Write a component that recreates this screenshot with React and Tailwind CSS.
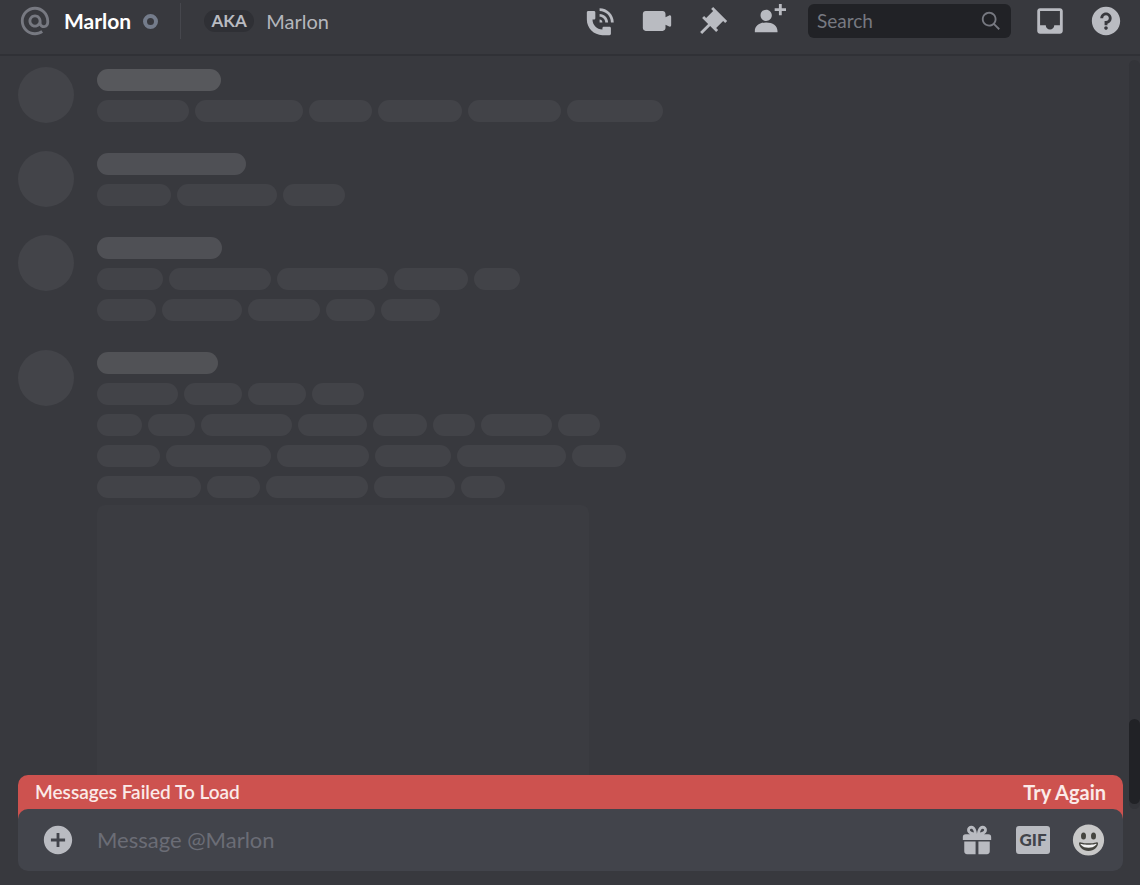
const PATHS = {
  at: "M12 2C6.486 2 2 6.486 2 12C2 17.515 6.486 22 12 22C14.039 22 15.993 21.398 17.652 20.259L16.521 18.611C15.195 19.519 13.633 20 12 20C7.589 20 4 16.411 4 12C4 7.589 7.589 4 12 4C16.411 4 20 7.589 20 12V12.782C20 14.17 19.402 15 18.4 15L18.398 15.018C18.338 15.005 18.273 15 18.209 15H18C17.437 15 16.6 14.182 16.6 13.631V12C16.6 9.464 14.537 7.4 12 7.4C9.463 7.4 7.4 9.463 7.4 12C7.4 14.537 9.463 16.6 12 16.6C13.234 16.6 14.35 16.106 15.177 15.313C15.826 16.269 16.93 17 18 17L18.002 16.981C18.064 16.994 18.129 17 18.195 17H18.4C20.552 17 22 15.306 22 12.782V12C22 6.486 17.514 2 12 2ZM12 14.599C10.566 14.599 9.4 13.433 9.4 11.999C9.4 10.565 10.566 9.399 12 9.399C13.434 9.399 14.6 10.565 14.6 11.999C14.6 13.433 13.434 14.599 12 14.599Z",
  call: "M11 5V3C16.515 3 21 7.486 21 13H19C19 8.589 15.411 5 11 5ZM17 13H15C15 10.795 13.206 9 11 9V7C14.309 7 17 9.691 17 13ZM11 11V13H13C13 11.896 12.105 11 11 11ZM14 16H18C18.553 16 19 16.447 19 17V21C19 21.553 18.553 22 18 22H13C6.925 22 2 17.075 2 11V6C2 5.447 2.448 5 3 5H7C7.553 5 8 5.447 8 6V10C8 10.553 7.553 11 7 11H6C6.063 14.938 9 18 13 18V17C13 16.447 13.447 16 14 16Z",
  video: "M21.526 8.149C21.231 7.966 20.862 7.951 20.553 8.105L18 9.382V7C18 5.897 17.103 5 16 5H4C2.897 5 2 5.897 2 7V17C2 18.104 2.897 19 4 19H16C17.103 19 18 18.104 18 17V14.618L20.553 15.894C20.694 15.965 20.847 16 21 16C21.183 16 21.365 15.949 21.526 15.851C21.82 15.668 22 15.347 22 15V9C22 8.653 21.82 8.332 21.526 8.149Z",
  pin: "M22 12L12.101 2.101L10.686 3.514L12.101 4.929L7.151 9.878V9.88L5.736 8.465L4.322 9.88L8.565 14.122L2.908 19.778L4.322 21.192L9.979 15.536L14.222 19.778L15.636 18.364L14.222 16.95L19.171 12H19.172L20.586 13.414L22 12Z",
  addFriend: "M21 3H24V5H21V8H19V5H16V3H19V0H21V3ZM10 12C12.205 12 14 10.205 14 8C14 5.795 12.205 4 10 4C7.795 4 6 5.795 6 8C6 10.205 7.795 12 10 12ZM10 13C5.289 13 2 15.467 2 19V20H18V19C18 15.467 14.711 13 10 13Z",
  search: "M21.707 20.293L16.314 14.9C17.403 13.504 18 11.799 18 10C18 7.863 17.167 5.854 15.656 4.344C14.146 2.832 12.137 2 10 2C7.863 2 5.854 2.832 4.344 4.344C2.833 5.854 2 7.863 2 10C2 12.137 2.833 14.146 4.344 15.656C5.854 17.168 7.863 18 10 18C11.799 18 13.504 17.404 14.9 16.314L20.293 21.706L21.707 20.293ZM10 16C8.397 16 6.891 15.376 5.758 14.243C4.624 13.11 4 11.603 4 10C4 8.398 4.624 6.891 5.758 5.758C6.891 4.624 8.397 4 10 4C11.603 4 13.109 4.624 14.242 5.758C15.376 6.891 16 8.398 16 10C16 11.603 15.376 13.11 14.242 14.243C13.109 15.376 11.603 16 10 16Z",
  inbox: "M19 3H4.99C3.88 3 3.01 3.89 3.01 5L3 19C3 20.1 3.88 21 4.99 21H19C20.1 21 21 20.1 21 19V5C21 3.89 20.1 3 19 3ZM19 15H15C15 16.66 13.65 18 12 18C10.35 18 9 16.66 9 15H4.99V5H19V15Z",
  help: "M12 2C6.486 2 2 6.487 2 12C2 17.515 6.486 22 12 22C17.514 22 22 17.515 22 12C22 6.487 17.514 2 12 2ZM12 18.25C11.31 18.25 10.75 17.691 10.75 17C10.75 16.31 11.31 15.75 12 15.75C12.69 15.75 13.25 16.31 13.25 17C13.25 17.691 12.69 18.25 12 18.25ZM13 13.875V15H11V12H12C13.104 12 14 11.103 14 10C14 8.896 13.104 8 12 8C10.896 8 10 8.896 10 10H8C8 7.795 9.795 6 12 6C14.205 6 16 7.795 16 10C16 11.861 14.723 13.429 13 13.875Z",
  plus: "M12 2C6.486 2 2 6.486 2 12C2 17.515 6.486 22 12 22C17.514 22 22 17.515 22 12C22 6.486 17.514 2 12 2ZM17 13H13V17H11V13H7V11H11V7H13V11H17V13Z",
  gift: "M16.886 8H20a2 2 0 0 1 2 2v2H2v-2a2 2 0 0 1 2-2h3.114c-.451-.235-.878-.522-1.235-.878a3 3 0 0 1 0-4.243c1.133-1.133 3.107-1.133 4.242-.002C11.758 4.514 11.979 7.595 12 7.941c.021-.346.242-3.427 1.879-5.064 1.135-1.131 3.109-1.131 4.242.002a3 3 0 0 1 0 4.243c-.357.356-.784.643-1.235.878ZM7.293 5.707c-.391-.39-.391-1.024 0-1.414A.99.99 0 0 1 8 4c.267 0 .518.104.707.293.605.606.963 1.617 1.149 2.485-.899-.19-1.944-.452-2.563-1.071ZM16.707 5.707c.391-.39.391-1.024 0-1.414A.99.99 0 0 0 16 4a.99.99 0 0 0-.707.293c-.605.606-.963 1.617-1.149 2.485.899-.19 1.944-.452 2.563-1.071ZM3 13h8v9H5a2 2 0 0 1-2-2v-7ZM13 13h8v7a2 2 0 0 1-2 2h-6v-9Z",
};

function Icon({ name, className = "size-[34px]" }) {
  return (
    <svg viewBox="0 0 24 24" fill="currentColor" fillRule="evenodd" aria-hidden="true" className={className}>
      <path d={PATHS[name]} />
    </svg>
  );
}

function IconButton({ name, label }) {
  return (
    <button type="button" aria-label={label} className="shrink-0 text-[#b9bbc1] hover:text-white">
      <Icon name={name} />
    </button>
  );
}

const GROUPS = [
  { name: 124, tone: "bg-[#57585c]", lines: [[92, 108, 63, 84, 93, 96]] },
  { name: 149, tone: "bg-[#4f5055]", lines: [[74, 100, 62]] },
  { name: 125, tone: "bg-[#4f5055]", lines: [[66, 102, 111, 74, 46], [59, 80, 72, 49, 59]] },
  {
    name: 121,
    tone: "bg-[#515256]",
    lines: [
      [81, 58, 58, 52],
      [45, 47, 91, 69, 54, 42, 71, 42],
      [63, 105, 92, 76, 109, 54],
      [104, 53, 102, 81, 44],
    ],
    attachment: true,
  },
];

function Placeholder({ group }) {
  return (
    <li className="flex gap-[23px]">
      <div className="size-14 shrink-0 rounded-full bg-[#434449]" />
      <div className="flex flex-col gap-[9px] pt-0.5 pb-[29px]">
        <div className={`h-[22px] rounded-full ${group.tone}`} style={{ width: group.name }} />
        {group.lines.map((line, i) => (
          <div key={i} className="flex gap-1.5">
            {line.map((width, j) => (
              <div key={j} className="h-[22px] rounded-full bg-[#424348]" style={{ width }} />
            ))}
          </div>
        ))}
        {group.attachment && <div className="-mt-0.5 h-80 w-[492px] rounded-lg bg-[#3b3c41]" />}
      </div>
    </li>
  );
}

function Header() {
  return (
    <header className="flex h-14 shrink-0 items-center justify-between border-b-2 border-[#303136] pr-[17px] pb-3 pl-[18px]">
      <div className="flex items-center">
        <Icon name="at" className="size-[34px] text-[#777981]" />
        <h1 className="ml-3 text-[21px] leading-7 font-bold text-white">Marlon</h1>
        <span role="img" aria-label="Offline" className="ml-3 size-[15px] rounded-full border-4 border-[#747c8b]" />
        <div className="ml-[22px] h-9 w-px bg-[#46474d]" />
        <span className="ml-[23px] flex h-[22px] w-[50px] items-center justify-center rounded-full bg-[#2f3035] text-[17px] leading-5 font-bold text-[#b9bbc1]">
          AKA
        </span>
        <span className="ml-3 text-[20px] leading-7 text-[#b4b6bc]">Marlon</span>
      </div>
      <div className="flex items-center gap-[22px]">
        <IconButton name="call" label="Start Voice Call" />
        <IconButton name="video" label="Start Video Call" />
        <IconButton name="pin" label="Pinned Messages" />
        <IconButton name="addFriend" label="Add Friends to DM" />
        <label className="flex h-[34px] w-[203px] items-center rounded-md bg-[#212226] px-[9px] text-[#777981]">
          <input
            type="text"
            aria-label="Search"
            placeholder="Search"
            className="min-w-0 flex-1 bg-transparent text-[19px] leading-6 text-white outline-none placeholder:text-[#777981]"
          />
          <Icon name="search" className="size-[22px] shrink-0" />
        </label>
        <IconButton name="inbox" label="Inbox" />
        <IconButton name="help" label="Help" />
      </div>
    </header>
  );
}

function EmojiFace() {
  return (
    <svg viewBox="0 0 34 34" aria-hidden="true" className="size-[34px]">
      <circle cx="16.500" cy="17" r="15.600" fill="#c8c8c8" />
      <ellipse cx="11.500" cy="13" rx="2.500" ry="3.500" fill="#45453f" />
      <ellipse cx="21.500" cy="13" rx="2.500" ry="3.500" fill="#45453f" />
      <path
        d="M16.500 20.300c-3.200 0-5.400-.4-7.800-.9-.6-.1-1.700 0-1.700 1 0 3.300 3.800 7.500 9.500 7.500s9.500-4.200 9.500-7.500c0-1-1.100-1.100-1.700-1-2.400.5-4.600.9-7.800.9Z"
        fill="#45453f"
      />
      <path d="M8.300 20.800s3 1 8.200 1 8.200-1 8.200-1-1.600 4-8.200 4-8.200-4-8.200-4Z" fill="#f2f2f2" />
    </svg>
  );
}

function Composer() {
  return (
    <form className="relative -mt-[34px] mr-[17px] mb-3.5 ml-[18px] shrink-0" onSubmit={(e) => e.preventDefault()}>
      <div role="alert" className="flex h-11 justify-between rounded-t-[10px] bg-[#cd524f] px-[17px] text-[#fbeae8]">
        <span className="text-[19px] leading-[34px] font-semibold">Messages Failed To Load</span>
        <button type="button" className="h-[34px] text-[20px] leading-[34px] font-bold hover:underline">
          Try Again
        </button>
      </div>
      <div className="-mt-2.5 flex h-[62px] items-center gap-[22px] rounded-[10px] bg-[#42444b] pr-[17px] pl-[23px]">
        <IconButton name="plus" label="Attach a file" />
        <input
          type="text"
          aria-label="Message @Marlon"
          placeholder="Message @Marlon"
          className="min-w-0 flex-1 bg-transparent text-[22px] leading-8 text-white outline-none placeholder:text-[#6b6d76]"
        />
        <IconButton name="gift" label="Send a gift" />
        <button
          type="button"
          aria-label="Open GIF picker"
          className="flex h-7 w-[34px] shrink-0 items-center justify-center rounded-[3px] bg-[#b9bbc1] text-[17px] leading-5 font-black text-[#42444b]"
        >
          GIF
        </button>
        <button type="button" aria-label="Select emoji" className="shrink-0">
          <EmojiFace />
        </button>
      </div>
    </form>
  );
}

export default function App() {
  return (
    <div className="flex h-screen flex-col overflow-hidden bg-[#38393e] font-['Lato','Noto_Sans',sans-serif]">
      <Header />
      <main className="flex min-h-0 flex-1 justify-between">
        <ul aria-label="Loading messages" className="min-w-0 flex-1 overflow-hidden pt-[11px] pl-[18px]">
          {GROUPS.map((group, i) => (
            <Placeholder key={i} group={group} />
          ))}
        </ul>
        <div className="flex w-[11px] shrink-0 flex-col pt-1">
          <div className="flex flex-1 flex-col justify-end rounded-md bg-[#333439] pb-[5px]">
            <div className="h-[85px] rounded-full bg-[#212226]" />
          </div>
        </div>
      </main>
      <Composer />
    </div>
  );
}
